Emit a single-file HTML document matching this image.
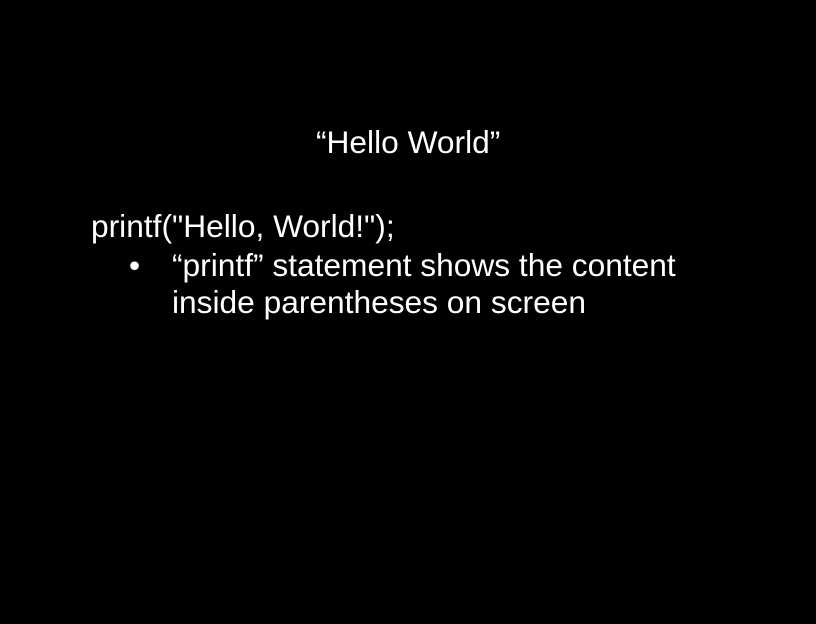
<!DOCTYPE html>
<html><head><style>
html,body{margin:0;padding:0;background:#000;width:816px;height:624px;overflow:hidden}
body{position:relative;font-family:"Liberation Sans",sans-serif;color:#fff}
div{position:absolute;white-space:nowrap;font-size:31.7px;line-height:1}
</style></head><body>
<div style="left:316px;top:127px">“Hello World”</div>
<div style="left:91px;top:211px">printf("Hello, World!");</div>
<div style="left:129px;top:250px">•</div>
<div style="left:172px;top:250px">“printf” statement shows the content</div>
<div style="left:172px;top:287px">inside parentheses on screen</div>
</body></html>
